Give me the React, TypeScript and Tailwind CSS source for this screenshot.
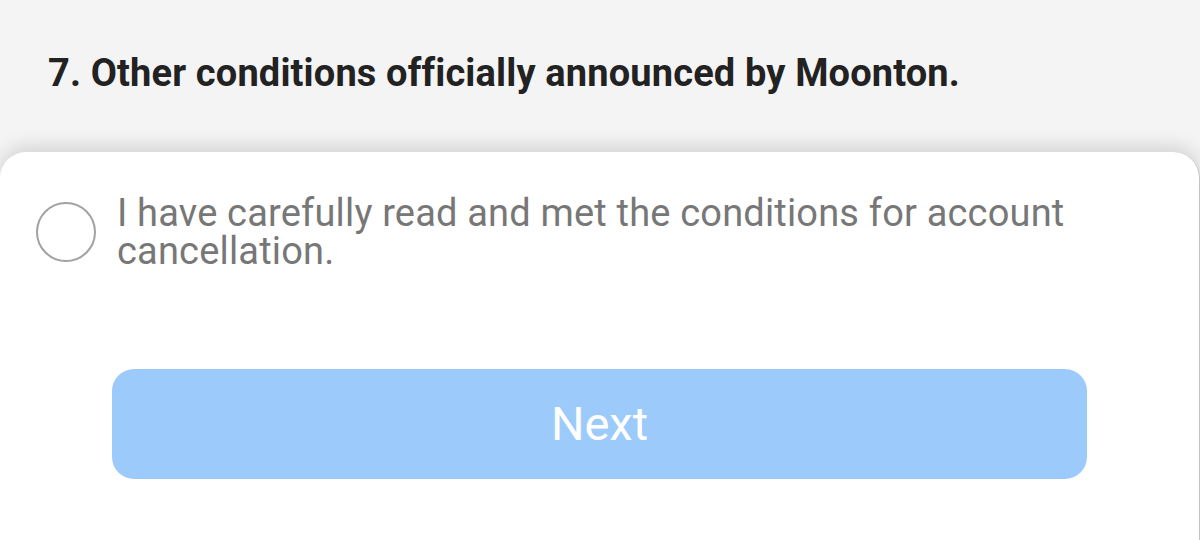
export default function App() {
  return (
    <div
      className="flex h-[540px] w-full flex-col overflow-hidden bg-[#f4f4f4]"
      style={{ fontFamily: 'Roboto, "Liberation Sans", sans-serif' }}
    >
      {/* Terms list behind the sheet */}
      <div className="h-[152px] shrink-0 pl-[48px] pt-[54px]">
        <p className="text-[38px] font-bold leading-[38px] tracking-[0.15px] text-[#222222]">
          7. Other conditions officially announced by Moonton.
        </p>
      </div>

      {/* Bottom sheet */}
      <div className="relative flex-1 rounded-t-[26px] border-r border-[#c4c4c4] bg-white shadow-[0_-6px_18px_rgba(0,0,0,0.13)]">
        <div className="flex items-center gap-[21px] pl-[36px] pr-[40px] pt-[42px]">
          <span className="h-[60px] w-[60px] shrink-0 rounded-full border-[2.5px] border-[#a2a2a2]" />
          <p className="text-[38px] leading-[38px] tracking-[0.18px] text-[#777777]">
            I have carefully read and met the conditions for account cancellation.
          </p>
        </div>

        <div className="px-[112px] pt-[99px]">
          <button className="flex h-[110px] w-full items-center justify-center rounded-[22px] bg-[#9ccbfb] text-[47px] text-white">
            Next
          </button>
        </div>
      </div>
    </div>
  );
}
